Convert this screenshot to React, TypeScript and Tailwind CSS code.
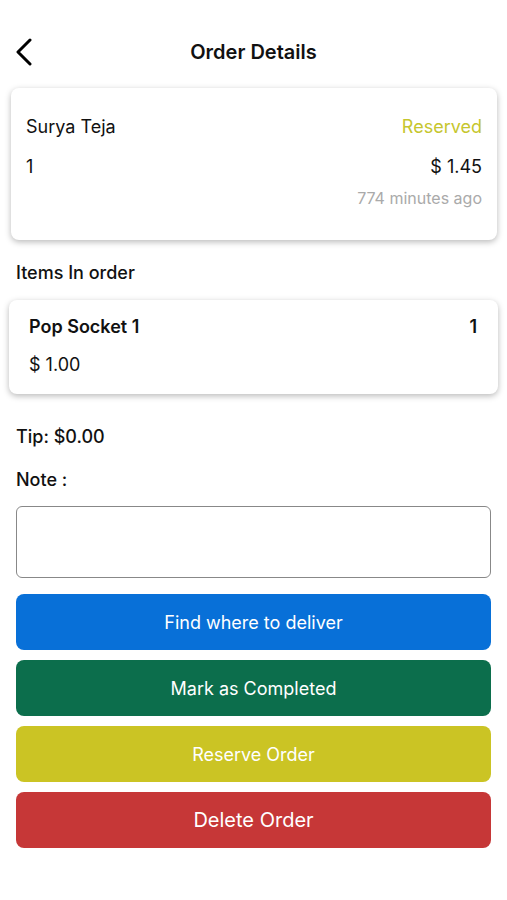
const buttons = [
  { label: "Find where to deliver", cls: "bg-[#0870d8] text-[18px]" },
  { label: "Mark as Completed", cls: "bg-[#0c6e4c] text-[18px]" },
  { label: "Reserve Order", cls: "bg-[#cbc424] text-[18px]" },
  { label: "Delete Order", cls: "bg-[#c63737] text-[20px]" },
]

export default function App() {
  return (
    <div className="w-[507px] h-[900px] bg-white text-[#111] font-['Inter',sans-serif]">
      {/* header */}
      <div className="relative h-[88px] flex justify-center pt-[38px]">
        <button className="absolute left-[14px] top-[38px] text-black">
          <svg width="20" height="28" viewBox="0 0 20 28" fill="none">
            <path d="M16 2 L4 14 L16 26" stroke="currentColor" strokeWidth="3" strokeLinecap="round" strokeLinejoin="round" />
          </svg>
        </button>
        <h1 className="text-[20px] leading-[28px] font-semibold">Order Details</h1>
      </div>

      <div className="px-[11px]">
        <div className="rounded-[8px] bg-white shadow-[0_2px_6px_rgba(0,0,0,0.28)] px-[15px] pt-[25px] pb-[30px] mr-[-1px]">
          <div className="flex justify-between items-center h-[26px]">
            <span className="text-[18px]">Surya Teja</span>
            <span className="text-[18px] text-[#c6c62e]">Reserved</span>
          </div>
          <div className="flex justify-between items-center h-[26px] mt-[14px]">
            <span className="text-[18px]">1</span>
            <span className="text-[18px]">$ 1.45</span>
          </div>
          <div className="flex justify-end h-[24px] mt-[7px]">
            <span className="text-[16px] text-[#aaa]">774 minutes ago</span>
          </div>
        </div>
      </div>

      <div className="px-[16px] pt-[19px] text-[18px] font-medium h-[60px]">Items In order</div>

      <div className="px-[9px]">
        <div className="rounded-[8px] bg-white shadow-[0_2px_6px_rgba(0,0,0,0.28)] pl-[20px] pr-[21px] pt-[13px] pb-[17px] h-[94px]">
          <div className="flex justify-between items-center h-[26px]">
            <span className="text-[18px] font-semibold">Pop Socket 1</span>
            <span className="text-[18px] font-semibold">1</span>
          </div>
          <div className="text-[18px] mt-[12px]">$ 1.00</div>
        </div>
      </div>

      <div className="px-[16px] pt-[29px] text-[18px] font-medium h-[72px]">Tip: $0.00</div>
      <div className="px-[16px] text-[18px] font-medium h-[38px]">Note :</div>

      <div className="px-[16px] mt-[2px]">
        <textarea className="block w-full h-[72px] rounded-[6px] border border-[#888] resize-none outline-none" />
      </div>

      <div className="px-[16px] pt-[16px] flex flex-col gap-[10px]">
        {buttons.map((b) => (
          <button
            key={b.label}
            className={`h-[56px] w-full rounded-[8px] text-white flex items-center justify-center ${b.cls}`}
          >
            {b.label}
          </button>
        ))}
      </div>
    </div>
  )
}
